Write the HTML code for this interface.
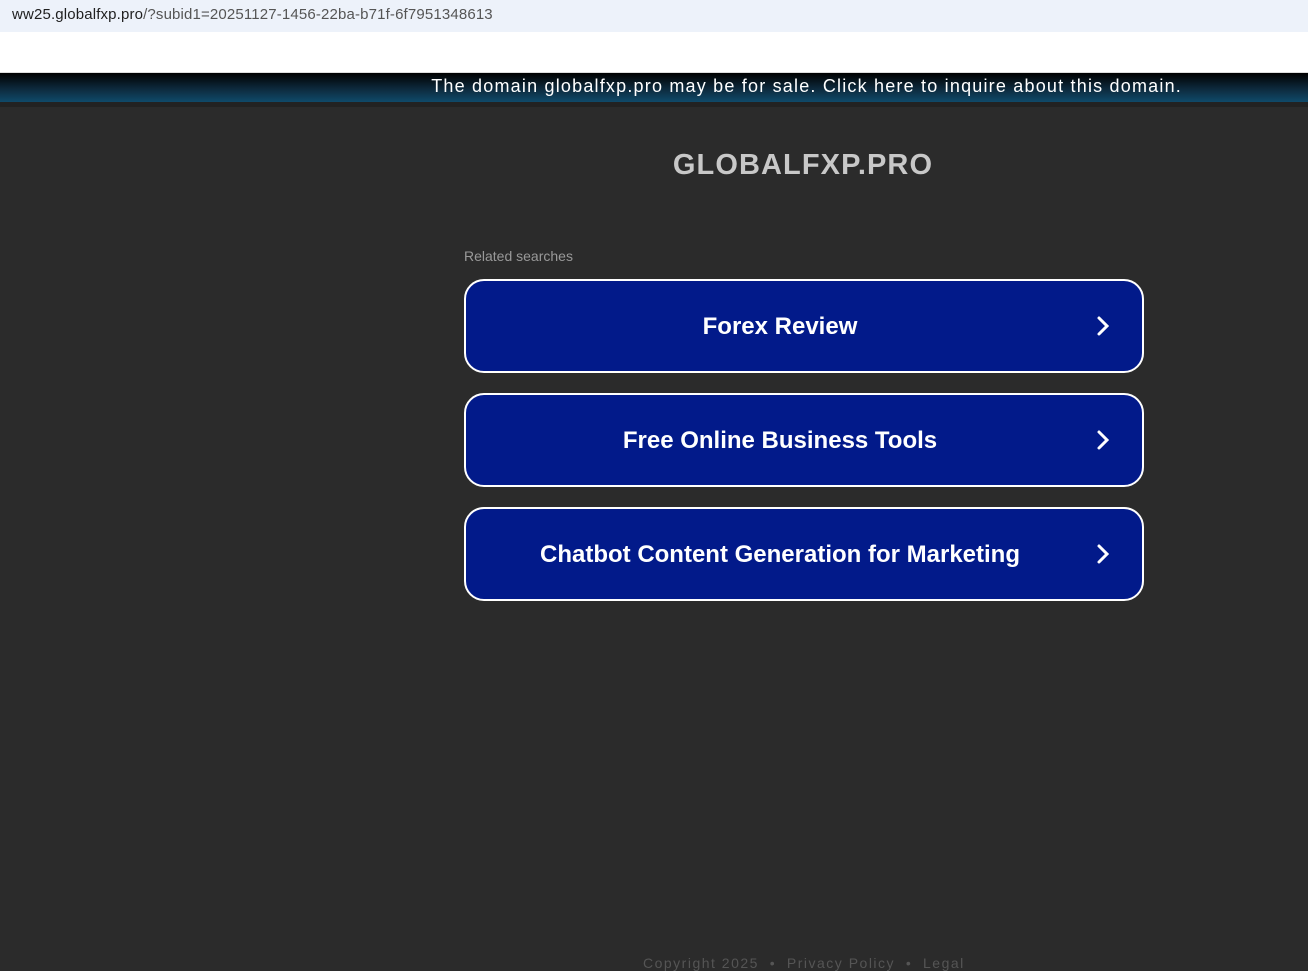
<!DOCTYPE html>
<html><head><meta charset="utf-8"><style>
*{margin:0;padding:0;box-sizing:border-box}
body{width:1308px;height:966px;overflow:hidden;background:#2b2b2b;font-family:"Liberation Sans",Arial,sans-serif;position:relative}
.url{position:absolute;left:0;top:0;width:1308px;height:32px;background:#edf2fa;font-size:15px;letter-spacing:0.15px;color:#1f1f1f;padding:6px 0 0 12px}
.url span{color:#555}
.white{position:absolute;top:32px;left:0;width:1308px;height:41px;background:#fff;border-bottom:1px solid #ddd}
.bar{position:absolute;top:73px;left:0;width:1308px;height:29px;background:linear-gradient(#000 0%,#0d2a3d 55%,#0f4a6a 100%);color:#fff;font-size:18px;letter-spacing:1.2px;text-align:right;padding:3px 126px 0 0;white-space:nowrap}
.shadow{position:absolute;top:102px;left:0;width:1308px;height:5px;background:#222}
h1{position:absolute;top:149px;left:0;width:1606px;text-align:center;font-size:29px;color:#c8c8c8;font-weight:bold;letter-spacing:1.1px}
.rel{position:absolute;left:464px;top:248px;font-size:14px;color:#999}
.btn{position:absolute;left:464px;width:680px;height:94px;background:#021a8a;border:2px solid #fff;border-radius:20px;color:#fff;font-weight:bold;font-size:24px;text-align:center;line-height:92px;padding-right:48px}
.btn svg{position:absolute;right:32px;top:34px}
.foot{position:absolute;top:955px;left:643px;font-size:14px;color:#555;letter-spacing:1.5px;white-space:nowrap}
</style></head><body>
<div class="url">ww25.globalfxp.pro<span>/?subid1=20251127-1456-22ba-b71f-6f7951348613</span></div>
<div class="white"></div>
<div class="bar">The domain globalfxp.pro may be for sale. Click here to inquire about this domain.</div>
<div class="shadow"></div>
<h1>GLOBALFXP.PRO</h1>
<div class="rel">Related searches</div>
<div class="btn" style="top:279px">Forex Review<svg width="14" height="22" viewBox="0 0 14 22"><path d="M3 3l8 8-8 8" stroke="#fff" stroke-width="3" fill="none" stroke-linecap="round"/></svg></div>
<div class="btn" style="top:393px">Free Online Business Tools<svg width="14" height="22" viewBox="0 0 14 22"><path d="M3 3l8 8-8 8" stroke="#fff" stroke-width="3" fill="none" stroke-linecap="round"/></svg></div>
<div class="btn" style="top:507px">Chatbot Content Generation for Marketing<svg width="14" height="22" viewBox="0 0 14 22"><path d="M3 3l8 8-8 8" stroke="#fff" stroke-width="3" fill="none" stroke-linecap="round"/></svg></div>
<div class="foot">Copyright 2025 &nbsp;•&nbsp; Privacy Policy &nbsp;•&nbsp; Legal</div>
</body></html>
